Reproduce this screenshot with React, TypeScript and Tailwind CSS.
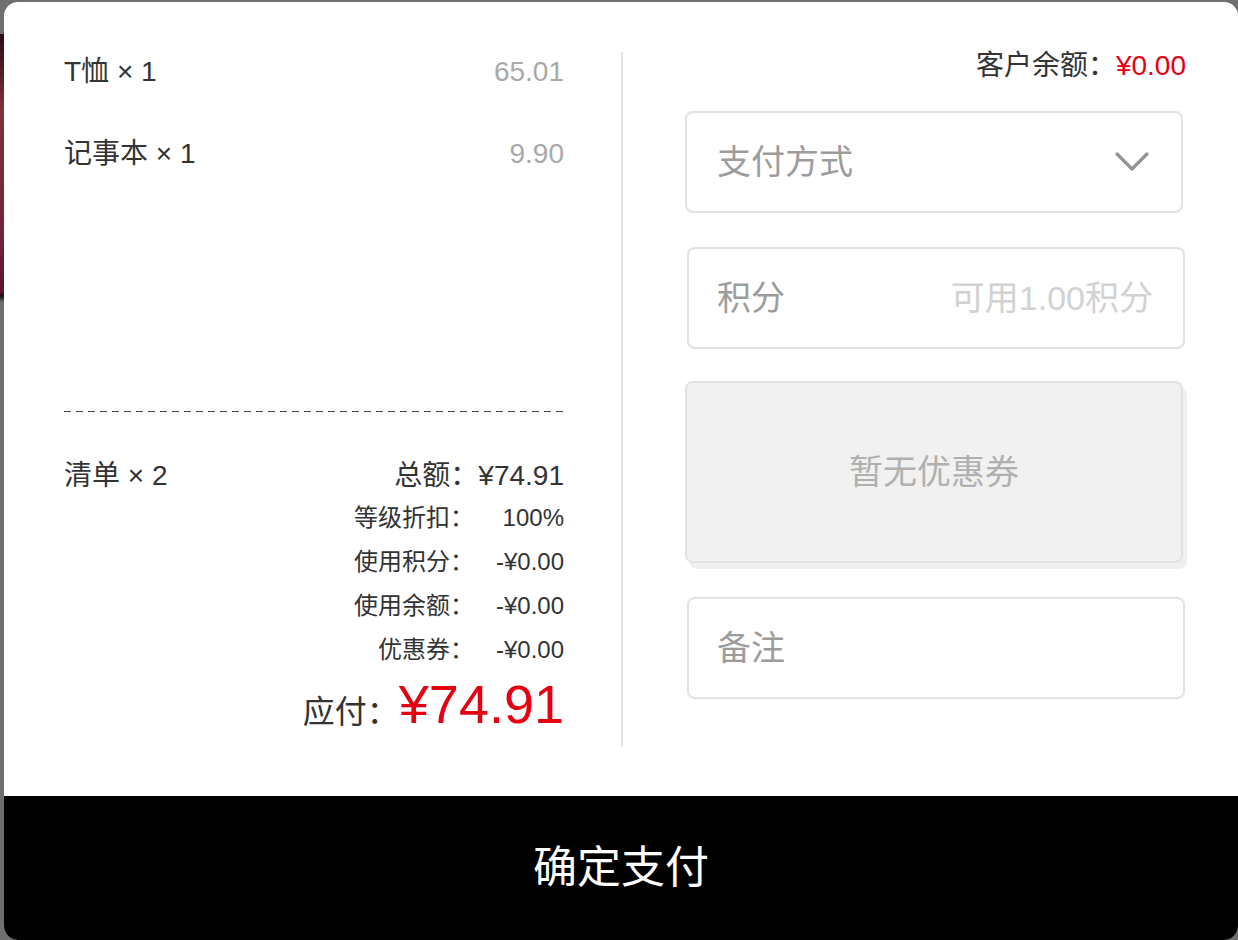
const font = "font-['Liberation_Sans','Noto_Sans_CJK_SC',sans-serif]";

const items = [
  { name: 'T恤', qty: 1, price: '65.01' },
  { name: '记事本', qty: 1, price: '9.90' },
];

const rows = [
  { label: '等级折扣：', value: '100%' },
  { label: '使用积分：', value: '-¥0.00' },
  { label: '使用余额：', value: '-¥0.00' },
  { label: '优惠券：', value: '-¥0.00' },
];

function Chevron() {
  return (
    <svg width="36" height="22" viewBox="0 0 36 22" fill="none">
      <path
        d="M3 3 L18 18 L33 3"
        stroke="#939393"
        strokeWidth="3.2"
        strokeLinecap="round"
        strokeLinejoin="round"
      />
    </svg>
  );
}

export default function App() {
  return (
    <div
      className={`h-[940px] w-full overflow-hidden pt-[2px] pl-[4px] ${font} bg-[linear-gradient(to_bottom,#6f6f6f_0,#6f6f6f_34px,#2c0a10_34px,#7c3440_110px,#6d2236_250px,#5c1428_292px,#111_296px,#6f6f6f_302px,#6f6f6f_100%)]`}
    >
      <div className="flex h-[938px] w-[1234px] flex-col overflow-hidden rounded-[14px] bg-white">
        <div className="flex h-[794px] py-[50px]">
          {/* left: order list */}
          <div className="flex w-[619px] flex-col border-r-2 border-[#e3e3e3] pl-[60px] pr-[57px] text-[#333]">
            <div className="flex h-[359px] flex-col gap-[42px]">
              {items.map((item) => (
                <div
                  key={item.name}
                  className="flex items-center justify-between text-[28px] leading-[40px]"
                >
                  <span>
                    {item.name} × {item.qty}
                  </span>
                  <span className="text-[#a9a9a9]">{item.price}</span>
                </div>
              ))}
            </div>

            <div className="h-px w-full bg-[repeating-linear-gradient(to_right,#444_0,#444_7px,transparent_7px,transparent_12px)]" />

            <div className="mt-[44px] flex items-center justify-between text-[28px] leading-[40px]">
              <span>清单 × 2</span>
              <span>总额：¥74.91</span>
            </div>

            <div className="flex flex-col">
              {rows.map((row) => (
                <div
                  key={row.label}
                  className="flex justify-end text-[24px] leading-[44px]"
                >
                  <span>{row.label}</span>
                  <span className="w-[90px] text-right">{row.value}</span>
                </div>
              ))}
            </div>

            <div className="mt-[2px] flex items-baseline justify-end leading-[60px]">
              <span className="text-[32px]">应付：</span>
              <span className="text-[54px] text-[#e60012]">¥74.91</span>
            </div>
          </div>

          {/* right: payment options */}
          <div className="flex flex-1 flex-col pl-[62px] pr-[52px]">
            <div className="flex justify-end text-[28px] leading-[28px] text-[#333]">
              客户余额：<span className="text-[#e60012]">¥0.00</span>
            </div>

            <div className="mt-[31px] flex h-[102px] w-[498px] items-center justify-between rounded-[8px] border-2 border-[#e2e2e2] pl-[30px] pr-[31px] text-[34px] text-[#9c9c9c]">
              <span>支付方式</span>
              <Chevron />
            </div>

            <div className="mt-[34px] ml-[2px] flex h-[102px] w-[498px] items-center justify-between rounded-[8px] border-2 border-[#e2e2e2] pl-[28px] pr-[30px] text-[34px]">
              <span className="text-[#9c9c9c]">积分</span>
              <span className="text-[#d2d2d2]">可用1.00积分</span>
            </div>

            <div className="mt-[32px] flex h-[182px] w-[498px] items-center justify-center rounded-[8px] border-2 border-[#e2e2e2] bg-[#f1f1f1] text-[34px] text-[#b0b0b0] shadow-[4px_6px_0_#efefef]">
              暂无优惠券
            </div>

            <div className="mt-[34px] ml-[2px] flex h-[102px] w-[498px] items-center rounded-[8px] border-2 border-[#e2e2e2] pl-[28px] text-[34px] text-[#9c9c9c]">
              备注
            </div>
          </div>
        </div>

        <button className="flex h-[144px] w-full items-center justify-center bg-black text-[44px] text-white">
          确定支付
        </button>
      </div>
    </div>
  );
}
